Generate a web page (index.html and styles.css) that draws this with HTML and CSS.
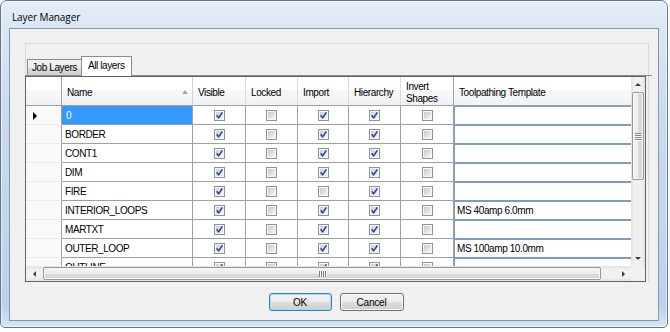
FILE: index.html
```html
<!DOCTYPE html>
<html>
<head>
<meta charset="utf-8">
<title>Layer Manager</title>
<link rel="stylesheet" href="styles.css">
</head>
<body>
<svg class="defs" width="0" height="0" aria-hidden="true">
  <defs>
    <linearGradient id="gOff" x1="0" y1="0" x2="1" y2="1">
      <stop offset="0" stop-color="#c9c9c9"/>
      <stop offset="1" stop-color="#f5f5f5"/>
    </linearGradient>
    <linearGradient id="gOn" x1="0" y1="0" x2="1" y2="1">
      <stop offset="0" stop-color="#c8d0e2"/>
      <stop offset="1" stop-color="#f3f5fa"/>
    </linearGradient>
    <symbol id="cbOn" viewBox="0 0 11 11">
      <rect x="0.5" y="0.5" width="10" height="10" fill="#f7f7f7" stroke="#8f9296"/>
      <rect x="2" y="2" width="7" height="7" fill="url(#gOn)"/>
      <path d="M2.7 5.3 L4.6 7.9 L8.4 2.4" fill="none" stroke="#2f4487" stroke-width="1.6" stroke-linejoin="round"/>
    </symbol>
    <symbol id="cbOff" viewBox="0 0 11 11">
      <rect x="0.5" y="0.5" width="10" height="10" fill="#f7f7f7" stroke="#8f9296"/>
      <rect x="2" y="2" width="7" height="7" fill="url(#gOff)"/>
    </symbol>
  </defs>
</svg>
<div class="window">
  <div class="titlebar"><span class="title">Layer Manager</span></div>
  <div class="client">
    <div class="panel">
      <div class="tabs">
        <div class="tab">Job Layers</div>
        <div class="tab active">All layers</div>
      </div>
      <div class="grid">
        <div class="viewport">
          <div class="row head">
            <div class="c w0"></div>
            <div class="c w1 namehead"><span>Name</span><i class="sort"></i></div>
            <div class="c w2">Visible</div>
            <div class="c w3">Locked</div>
            <div class="c w4">Import</div>
            <div class="c w5">Hierarchy</div>
            <div class="c w6">Invert<br>Shapes</div>
            <div class="c w7">Toolpathing Template</div>
          </div>

          <div class="row">
            <div class="c w0 rh"><i class="cur"></i></div>
            <div class="c w1 nm sel">0</div>
            <div class="c w2 ck"><svg class="cb"><use href="#cbOn"/></svg></div>
            <div class="c w3 ck"><svg class="cb"><use href="#cbOff"/></svg></div>
            <div class="c w4 ck"><svg class="cb"><use href="#cbOn"/></svg></div>
            <div class="c w5 ck"><svg class="cb"><use href="#cbOn"/></svg></div>
            <div class="c w6 ck"><svg class="cb"><use href="#cbOff"/></svg></div>
            <div class="c w7 tp"></div>
          </div>

          <div class="row">
            <div class="c w0 rh"></div>
            <div class="c w1 nm">BORDER</div>
            <div class="c w2 ck"><svg class="cb"><use href="#cbOn"/></svg></div>
            <div class="c w3 ck"><svg class="cb"><use href="#cbOff"/></svg></div>
            <div class="c w4 ck"><svg class="cb"><use href="#cbOn"/></svg></div>
            <div class="c w5 ck"><svg class="cb"><use href="#cbOn"/></svg></div>
            <div class="c w6 ck"><svg class="cb"><use href="#cbOff"/></svg></div>
            <div class="c w7 tp"></div>
          </div>

          <div class="row">
            <div class="c w0 rh"></div>
            <div class="c w1 nm">CONT1</div>
            <div class="c w2 ck"><svg class="cb"><use href="#cbOn"/></svg></div>
            <div class="c w3 ck"><svg class="cb"><use href="#cbOff"/></svg></div>
            <div class="c w4 ck"><svg class="cb"><use href="#cbOn"/></svg></div>
            <div class="c w5 ck"><svg class="cb"><use href="#cbOn"/></svg></div>
            <div class="c w6 ck"><svg class="cb"><use href="#cbOff"/></svg></div>
            <div class="c w7 tp"></div>
          </div>

          <div class="row">
            <div class="c w0 rh"></div>
            <div class="c w1 nm">DIM</div>
            <div class="c w2 ck"><svg class="cb"><use href="#cbOn"/></svg></div>
            <div class="c w3 ck"><svg class="cb"><use href="#cbOff"/></svg></div>
            <div class="c w4 ck"><svg class="cb"><use href="#cbOn"/></svg></div>
            <div class="c w5 ck"><svg class="cb"><use href="#cbOn"/></svg></div>
            <div class="c w6 ck"><svg class="cb"><use href="#cbOff"/></svg></div>
            <div class="c w7 tp"></div>
          </div>

          <div class="row">
            <div class="c w0 rh"></div>
            <div class="c w1 nm">FIRE</div>
            <div class="c w2 ck"><svg class="cb"><use href="#cbOn"/></svg></div>
            <div class="c w3 ck"><svg class="cb"><use href="#cbOff"/></svg></div>
            <div class="c w4 ck"><svg class="cb"><use href="#cbOff"/></svg></div>
            <div class="c w5 ck"><svg class="cb"><use href="#cbOn"/></svg></div>
            <div class="c w6 ck"><svg class="cb"><use href="#cbOff"/></svg></div>
            <div class="c w7 tp"></div>
          </div>

          <div class="row">
            <div class="c w0 rh"></div>
            <div class="c w1 nm">INTERIOR_LOOPS</div>
            <div class="c w2 ck"><svg class="cb"><use href="#cbOn"/></svg></div>
            <div class="c w3 ck"><svg class="cb"><use href="#cbOff"/></svg></div>
            <div class="c w4 ck"><svg class="cb"><use href="#cbOn"/></svg></div>
            <div class="c w5 ck"><svg class="cb"><use href="#cbOn"/></svg></div>
            <div class="c w6 ck"><svg class="cb"><use href="#cbOff"/></svg></div>
            <div class="c w7 tp">MS 40amp 6.0mm</div>
          </div>

          <div class="row">
            <div class="c w0 rh"></div>
            <div class="c w1 nm">MARTXT</div>
            <div class="c w2 ck"><svg class="cb"><use href="#cbOn"/></svg></div>
            <div class="c w3 ck"><svg class="cb"><use href="#cbOff"/></svg></div>
            <div class="c w4 ck"><svg class="cb"><use href="#cbOn"/></svg></div>
            <div class="c w5 ck"><svg class="cb"><use href="#cbOn"/></svg></div>
            <div class="c w6 ck"><svg class="cb"><use href="#cbOff"/></svg></div>
            <div class="c w7 tp"></div>
          </div>

          <div class="row">
            <div class="c w0 rh"></div>
            <div class="c w1 nm">OUTER_LOOP</div>
            <div class="c w2 ck"><svg class="cb"><use href="#cbOn"/></svg></div>
            <div class="c w3 ck"><svg class="cb"><use href="#cbOff"/></svg></div>
            <div class="c w4 ck"><svg class="cb"><use href="#cbOn"/></svg></div>
            <div class="c w5 ck"><svg class="cb"><use href="#cbOn"/></svg></div>
            <div class="c w6 ck"><svg class="cb"><use href="#cbOff"/></svg></div>
            <div class="c w7 tp">MS 100amp 10.0mm</div>
          </div>

          <div class="row">
            <div class="c w0 rh"></div>
            <div class="c w1 nm">OUTLINE</div>
            <div class="c w2 ck"><svg class="cb"><use href="#cbOn"/></svg></div>
            <div class="c w3 ck"><svg class="cb"><use href="#cbOff"/></svg></div>
            <div class="c w4 ck"><svg class="cb"><use href="#cbOn"/></svg></div>
            <div class="c w5 ck"><svg class="cb"><use href="#cbOn"/></svg></div>
            <div class="c w6 ck"><svg class="cb"><use href="#cbOff"/></svg></div>
            <div class="c w7 tp"></div>
          </div>
        </div>

        <div class="vscroll">
          <div class="arr"><i class="tri up"></i></div>
          <div class="vthumb"><i class="gh"></i><i class="gh"></i><i class="gh"></i><i class="gh"></i></div>
          <div class="track"></div>
          <div class="arr"><i class="tri down"></i></div>
        </div>
        <div class="hscroll">
          <div class="arr"><i class="tri left"></i></div>
          <div class="hthumb"><i class="gv"></i><i class="gv"></i><i class="gv"></i><i class="gv"></i></div>
          <div class="track"></div>
          <div class="arr"><i class="tri right"></i></div>
        </div>
        <div class="corner"></div>
      </div>
    </div>
    <div class="buttons">
      <button class="btn def" type="button">OK</button>
      <button class="btn" type="button">Cancel</button>
    </div>
  </div>
</div>
</body>
</html>
```

FILE: styles.css
```css
* { box-sizing: border-box; }
html, body { margin: 0; padding: 0; }
body {
  width: 670px;
  height: 332px;
  overflow: hidden;
  background: #ffffff;
  font-family: "Liberation Sans", Arial, sans-serif;
  font-size: 10px;
  letter-spacing: -0.4px;
  color: #000;
}
.defs { display: block; width: 0; height: 0; overflow: hidden; }

.window {
  width: 668px;
  height: 328px;
  border: 1px solid #63758a;
  border-radius: 7px 7px 5px 5px;
  background: linear-gradient(180deg, #e6eef8 0px, #dae6f3 27px, #c9daee 120px, #bcd2ea 94%, #d6e6f6 100%);
  box-shadow: inset 0 0 0 1px rgba(255,255,255,0.6);
  padding: 0 8px 6px 8px;
  display: flex;
  flex-direction: column;
}
.titlebar {
  height: 27px;
  flex: none;
  display: flex;
  align-items: center;
  padding: 4px 0 0 3px;
}
.title {
  font-family: "Open Sans", "Liberation Sans", sans-serif;
  font-size: 10px;
  letter-spacing: -0.1px;
  color: #000;
}
.client {
  flex: 1;
  border: 1px solid #8797ab;
  background: #f0f0f0;
  padding-top: 14px;
  display: flex;
  flex-direction: column;
}

.panel {
  margin-left: 15px;
  width: 624px;
  border-top: 1px solid #d9d9d9;
  border-left: 1px solid #d9d9d9;
  border-right: 1px solid #d9d9d9;
  padding-top: 12px;
}

/* tabs */
.tabs {
  display: flex;
  align-items: flex-end;
  height: 20px;
  border-bottom: 1px solid #898c95;
  padding-left: 2px;
  margin-left: -1px;
  margin-right: -4px;
}
.tab {
  height: 16px;
  padding: 0 4px;
  border: 1px solid #898c95;
  border-bottom: none;
  background: linear-gradient(180deg, #f2f2f2 0%, #ebebeb 50%, #dddddd 51%, #cfcfcf 100%);
  display: flex;
  align-items: center;
  white-space: nowrap;
}
.tab.active {
  height: 20px;
  margin-bottom: -1px;
  margin-left: -1px;
  padding: 0 6px 2px 6px;
  background: #ffffff;
}

/* grid */
.grid {
  margin-left: -1px;
  width: 621px;
  height: 206px;
  border: 1px solid #646464;
  background: #ffffff;
  display: grid;
  grid-template-columns: 605px 14px;
  grid-template-rows: 189px 15px;
}
.viewport { overflow: hidden; background: #ffffff; }
.row { display: flex; width: 640px; height: 19px; }
.row.head { height: 29px; }
.c {
  flex: none;
  height: 100%;
  border-right: 1px solid #a0a0a0;
  border-bottom: 1px solid #a0a0a0;
  display: flex;
  align-items: center;
  white-space: nowrap;
  overflow: hidden;
}
.w0 { width: 36px; }
.w1 { width: 131px; }
.w2 { width: 53px; }
.w3 { width: 52px; }
.w4 { width: 51px; }
.w5 { width: 52px; }
.w6 { width: 53px; }
.w7 { width: 212px; }

.head .c {
  background: linear-gradient(180deg, #ffffff 0%, #ffffff 45%, #f7f8fa 46%, #f1f2f4 100%);
  border-right-color: #dcdcdc;
  border-bottom-color: #a0a0a0;
  padding: 3px 0 0 5px;
  line-height: 12px;
}
.head .w0 { border-right-color: #a0a0a0; }
.head .w6 { border-right-color: #a0a0a0; }
.head .w1 { border-right-color: #d0d0d0; }
.namehead { justify-content: space-between; padding-right: 4px !important; }
.sort {
  width: 0; height: 0;
  border-left: 3.5px solid transparent;
  border-right: 3.5px solid transparent;
  border-bottom: 4px solid #a8a8a8;
  margin-top: -2px;
}

.rh {
  background: #fafafa;
  border-bottom-color: #ececec;
  padding-left: 7px;
}
.cur {
  width: 0; height: 0;
  border-top: 4px solid transparent;
  border-bottom: 4px solid transparent;
  border-left: 4px solid #000;
  margin-top: 1px;
}
.nm { padding-left: 3px; }
.sel { background: #3399ff; color: #ffffff; padding-left: 4px; }
.ck { justify-content: center; }
.cb { width: 11px; height: 11px; display: block; }
.tp {
  padding-left: 3px;
  border-bottom-color: #7b9cc0;
  box-shadow: inset 1px 1px 0 #7d9ec3;
  border-right: none;
}

/* scrollbars */
.vscroll {
  grid-column: 2;
  grid-row: 1;
  display: flex;
  flex-direction: column;
  background: linear-gradient(90deg, #e2e2e2 0%, #f1f1f1 25%, #f1f1f1 75%, #e2e2e2 100%);
}
.hscroll {
  grid-column: 1;
  grid-row: 2;
  display: flex;
  background: linear-gradient(180deg, #e2e2e2 0%, #f1f1f1 25%, #f1f1f1 75%, #e2e2e2 100%);
}
.corner { grid-column: 2; grid-row: 2; background: #f0f0f0; }
.arr { flex: none; display: flex; align-items: center; justify-content: center; }
.vscroll .arr { height: 15px; }
.hscroll .arr { width: 16px; }
.track { flex: 1; }
.tri { width: 0; height: 0; display: block; }
.tri.up { border-left: 3px solid transparent; border-right: 3px solid transparent; border-bottom: 3px solid #3c3c3c; }
.tri.down { border-left: 3px solid transparent; border-right: 3px solid transparent; border-top: 3px solid #3c3c3c; }
.tri.left { border-top: 3px solid transparent; border-bottom: 3px solid transparent; border-right: 3px solid #3c3c3c; }
.tri.right { border-top: 3px solid transparent; border-bottom: 3px solid transparent; border-left: 3px solid #3c3c3c; }

.vthumb {
  flex: none;
  height: 88px;
  margin: 0 1px;
  border: 1px solid #979797;
  border-radius: 2px;
  background: linear-gradient(90deg, #f4f4f4 0%, #ececec 50%, #dcdcdc 51%, #d4d4d4 100%);
  box-shadow: inset 0 0 0 1px #f8f8f8;
  display: flex;
  flex-direction: column;
  align-items: center;
  justify-content: center;
  gap: 1px;
}
.gh { display: block; width: 6px; height: 1px; background: #7e7e7e; box-shadow: 0 1px 0 #ffffff; }
.hthumb {
  flex: none;
  width: 558px;
  margin: 1px 0 1px 1px;
  border: 1px solid #979797;
  border-radius: 2px;
  background: linear-gradient(180deg, #f4f4f4 0%, #ececec 50%, #dcdcdc 51%, #d4d4d4 100%);
  box-shadow: inset 0 0 0 1px #f8f8f8;
  display: flex;
  align-items: center;
  justify-content: center;
  gap: 1px;
}
.gv { display: block; width: 1px; height: 6px; background: #7e7e7e; box-shadow: 1px 0 0 #ffffff; }

/* buttons */
.buttons {
  display: flex;
  justify-content: center;
  gap: 8px;
  padding-left: 4px;
  margin-top: 11px;
}
.btn {
  width: 63px;
  height: 18px;
  padding: 0;
  margin: 0;
  font-family: "Liberation Sans", Arial, sans-serif;
  font-size: 10px;
  letter-spacing: -0.2px;
  color: #000;
  border: 1px solid #707070;
  border-radius: 3px;
  background: linear-gradient(180deg, #f2f2f2 0%, #ebebeb 50%, #dddddd 51%, #cfcfcf 100%);
  box-shadow: inset 0 0 0 1px #fbfbfb;
}
.btn + .btn { width: 64px; }
.btn.def {
  border-color: #3c7fb1;
  box-shadow: inset 0 0 0 1px #9edff8;
}
```
